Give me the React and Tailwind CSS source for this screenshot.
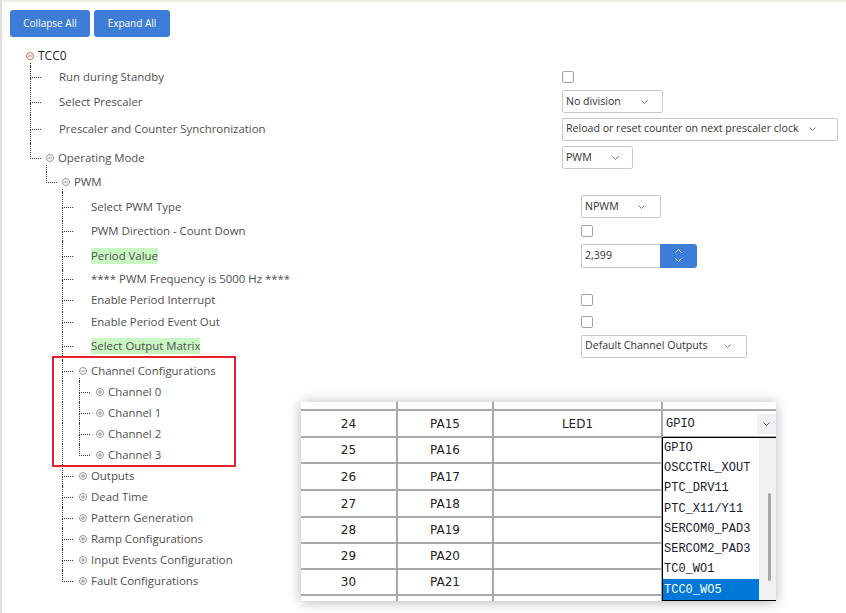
import React from 'react';

// tree of TCC0 settings; d = depth, node = 'open' | 'closed' for expandable items
const rows = [
  { d: 0, label: 'TCC0', node: 'open', h: 'h-[20px]' },
  { d: 1, label: 'Run during Standby', h: 'h-[22px]', ctrl: { type: 'check' } },
  { d: 1, label: 'Select Prescaler', h: 'h-[27px]', ctrl: { type: 'select', value: 'No division', w: 'w-[101px]', pr: 'pr-[14px]' } },
  { d: 1, label: 'Prescaler and Counter Synchronization', h: 'h-[28px]', ctrl: { type: 'select', value: 'Reload or reset counter on next prescaler clock', w: 'w-[276px]', pr: 'pr-[21px]' } },
  { d: 1, label: 'Operating Mode', node: 'open', h: 'h-[29px]', ctrl: { type: 'select', value: 'PWM', w: 'w-[71px]', pr: 'pr-[13px]' } },
  { d: 2, label: 'PWM', node: 'open', h: 'h-[20px]' },
  { d: 3, label: 'Select PWM Type', h: 'h-[29px]', ctrl: { type: 'select', value: 'NPWM', w: 'w-[80px]', pr: 'pr-[15px]' } },
  { d: 3, label: 'PWM Direction - Count Down', h: 'h-[20px]', ctrl: { type: 'check' } },
  { d: 3, label: 'Period Value', hl: true, h: 'h-[29px]', ctrl: { type: 'spin', value: '2,399' } },
  { d: 3, label: '**** PWM Frequency is 5000 Hz ****', h: 'h-[18px]' },
  { d: 3, label: 'Enable Period Interrupt', h: 'h-[24px]', ctrl: { type: 'check' } },
  { d: 3, label: 'Enable Period Event Out', h: 'h-[20px]', ctrl: { type: 'check' } },
  { d: 3, label: 'Select Output Matrix', hl: true, h: 'h-[28px]', ctrl: { type: 'select', value: 'Default Channel Outputs', w: 'w-[166px]', pr: 'pr-[15px]' } },
  { d: 3, label: 'Channel Configurations', node: 'open', h: 'h-[21px]' },
  { d: 4, label: 'Channel 0', node: 'closed', h: 'h-[21px]' },
  { d: 4, label: 'Channel 1', node: 'closed', h: 'h-[21px]' },
  { d: 4, label: 'Channel 2', node: 'closed', h: 'h-[21px]' },
  { d: 4, label: 'Channel 3', node: 'closed', h: 'h-[21px]' },
  { d: 3, label: 'Outputs', node: 'closed', h: 'h-[21px]' },
  { d: 3, label: 'Dead Time', node: 'closed', h: 'h-[21px]' },
  { d: 3, label: 'Pattern Generation', node: 'closed', h: 'h-[21px]' },
  { d: 3, label: 'Ramp Configurations', node: 'closed', h: 'h-[21px]' },
  { d: 3, label: 'Input Events Configuration', node: 'closed', h: 'h-[21px]' },
  { d: 3, label: 'Fault Configurations', node: 'closed', h: 'h-[21px]' },
];

const guideW = { 1: 'w-[16px]', 2: 'w-[16px]', 3: 'w-[17px]' };
const nodeGap = { 1: 'w-[5px]', 2: 'w-[5px]', 3: 'w-[6px]', 4: 'w-[6px]' };
const dots = 'border-dotted border-[#333]';

const pins = [
  { n: 24, pin: 'PA15', name: 'LED1', h: 'h-[27px]' },
  { n: 25, pin: 'PA16', h: 'h-[26px]' },
  { n: 26, pin: 'PA17', h: 'h-[27px]' },
  { n: 27, pin: 'PA18', h: 'h-[27px]' },
  { n: 28, pin: 'PA19', h: 'h-[26px]' },
  { n: 29, pin: 'PA20', h: 'h-[26px]' },
  { n: 30, pin: 'PA21', h: 'h-[26px]' },
];

const functions = [
  { v: 'GPIO', h: 'h-[20px]' },
  { v: 'OSCCTRL_XOUT', h: 'h-[20px]' },
  { v: 'PTC_DRV11', h: 'h-[20px]' },
  { v: 'PTC_X11/Y11', h: 'h-[21px]' },
  { v: 'SERCOM0_PAD3', h: 'h-[20px]' },
  { v: 'SERCOM2_PAD3', h: 'h-[20px]' },
  { v: 'TC0_WO1', h: 'h-[20px]' },
  { v: 'TCC0_WO5', h: 'h-[21px]', sel: true },
];

// true when a later sibling at depth k follows row i
function continues(i, k) {
  for (let j = i + 1; j < rows.length; j++) {
    if (rows[j].d < k) return false;
    if (rows[j].d === k) return true;
  }
  return false;
}

function Toggle({ open, color = '#8a8a8a' }) {
  return (
    <svg width="8" height="8" viewBox="0 0 8 8" className="block shrink-0">
      <circle cx="4" cy="4" r="3.5" fill="none" stroke={color} strokeWidth="0.9" />
      <path d="M2 4h4" stroke={color} strokeWidth="0.9" />
      {!open && <path d="M4 2v4" stroke={color} strokeWidth="0.9" />}
    </svg>
  );
}

function Chevron({ color = '#7a7a7a', up = false }) {
  return (
    <svg width="7" height="4" viewBox="0 0 7 4" className="block shrink-0">
      <path d={up ? 'M0.5 3.5L3.5 0.5L6.5 3.5' : 'M0.5 0.5L3.5 3.5L6.5 0.5'} fill="none" stroke={color} strokeWidth="1" />
    </svg>
  );
}

function Control({ ctrl }) {
  if (ctrl.type === 'check') {
    return <span className="block h-[12px] w-[12px] rounded-[2px] border border-[#a3a3a3] bg-white" />;
  }
  if (ctrl.type === 'spin') {
    return (
      <div className="flex h-[24px]">
        <div className="flex w-[79px] items-center rounded-l-[2px] border border-r-0 border-[#c8c8c8] bg-white pl-[3px] text-[10.6px] text-[#333]">
          {ctrl.value}
        </div>
        <div className="flex w-[37px] flex-col items-center justify-center gap-[5px] rounded-r-[3px] bg-[#3d7dd8]">
          <Chevron color="#fff" up />
          <Chevron color="#fff" />
        </div>
      </div>
    );
  }
  return (
    <div className={`flex h-[23px] ${ctrl.w} ${ctrl.pr} items-center justify-between rounded-[2px] border border-[#c8c8c8] bg-white pl-[3px] text-[10.6px] text-[#333]`}>
      <span className="whitespace-nowrap">{ctrl.value}</span>
      <Chevron />
    </div>
  );
}

function TreeRow({ row, i }) {
  const { d } = row;
  const open = row.node === 'open';
  const last = d > 0 && !continues(i, d);
  const guides = [];
  for (let k = 1; k < d; k++) guides.push({ k, on: continues(i, k) });

  const label = (
    <span
      className={`whitespace-nowrap leading-[16px] ${d === 0 ? 'text-[12px] text-[#1d1d1d]' : 'text-[11.4px] text-[#4f4f4f]'} ${row.hl ? 'bg-[#c9f7c2]' : ''}`}
    >
      {row.label}
    </span>
  );

  return (
    <div className={`flex ${row.h}`}>
      <div className={`flex shrink-0 items-stretch ${d >= 3 ? 'w-[579px]' : 'w-[560px]'}`}>
        {d === 0 ? (
          <div className="w-[24px] shrink-0" />
        ) : (
          <>
            <div className="w-[28px] shrink-0" />
            {guides.map((g) => (
              <div key={g.k} className={`${guideW[g.k]} shrink-0 ${g.on ? `border-l ${dots}` : ''}`} />
            ))}
            <div className="flex w-[11px] shrink-0 flex-col">
              <div className={`h-[calc(50%+1px)] border-b border-l ${dots}`} />
              <div className={`flex-1 ${last ? '' : `border-l ${dots}`}`} />
            </div>
          </>
        )}
        {row.node ? (
          <>
            {d > 0 && <div className={`${nodeGap[d]} shrink-0`} />}
            <div className="flex w-[8px] shrink-0 flex-col">
              <div className="mb-[3px] flex-1" />
              <Toggle open={open} color={d === 0 ? '#c0603c' : '#8a8a8a'} />
              <div className="mt-[3px] flex-1">
                {open && <div className={`h-full border-l ${dots} ${d === 0 ? 'ml-[4px]' : ''}`} />}
              </div>
            </div>
            <div className="w-[4px] shrink-0" />
          </>
        ) : (
          <div className="w-[18px] shrink-0" />
        )}
        <div className="flex items-center">{label}</div>
      </div>
      {row.ctrl && (
        <div className="flex items-center">
          <Control ctrl={row.ctrl} />
        </div>
      )}
    </div>
  );
}

function PinCells({ n, pin, children, h, top }) {
  return (
    <div className={`flex ${h} border-b-2 border-[#a9a9a9]`}>
      <div className="flex w-[97px] items-center justify-center border-r-2 border-[#a9a9a9]">{n}</div>
      <div className="flex w-[96px] items-center justify-center border-r-2 border-[#a9a9a9]">{pin}</div>
      <div className="flex w-[169px] items-center justify-center border-r-2 border-[#a9a9a9]">{top}</div>
      <div className="flex flex-1 items-center">{children}</div>
    </div>
  );
}

function PinPopup() {
  return (
    <div className="absolute left-[299px] top-[400px] h-[199px] w-[475px] overflow-hidden bg-white font-['DejaVu_Sans',sans-serif] text-[12px] text-[#222] shadow-[0_1px_12px_rgba(0,0,0,0.3)]">
      <PinCells h="h-[9px]" />
      {pins.map((p) => (
        <PinCells key={p.n} n={p.n} pin={p.pin} top={p.name} h={p.h}>
          {p.name && (
            <div className="flex h-[20px] w-full">
              <div className="flex flex-1 items-center bg-white pl-[3px] font-['Liberation_Mono',monospace] text-[12px] text-[#1a1a2e]">GPIO</div>
              <div className="flex w-[19px] items-center justify-center bg-[#eef0f3]">
                <Chevron color="#666" />
              </div>
            </div>
          )}
        </PinCells>
      ))}
      <div className="flex h-[20px]">
        <div className="w-[97px] border-r-2 border-[#a9a9a9]" />
        <div className="w-[96px] border-r-2 border-[#a9a9a9]" />
        <div className="w-[169px] border-r-2 border-[#a9a9a9]" />
      </div>

      <div className="absolute left-[361px] top-[35px] flex h-[164px] w-[114px] border-b border-l border-t border-black bg-white">
        <div className="flex w-[96px] flex-col">
          {functions.map((f) => (
            <div
              key={f.v}
              className={`flex ${f.h} items-center pl-[1px] font-['Liberation_Mono',monospace] text-[12px] ${f.sel ? 'bg-[#0078d7] text-white' : 'text-[#1a1a2e]'}`}
            >
              {f.v}
            </div>
          ))}
        </div>
        <div className="flex flex-1 flex-col bg-[#f0f0f0]">
          <div className="ml-[9px] mt-[55px] h-[88px] w-[3px] rounded-full bg-[#a6a6a6]" />
        </div>
      </div>
    </div>
  );
}

export default function App() {
  return (
    <div className="relative h-[613px] w-[846px] overflow-hidden border-l-2 border-t-2 border-l-[#dedede] border-t-[#f2f0e6] bg-white font-['Open_Sans','Noto_Sans',sans-serif]">
      <div className="ml-[8px] mt-[8px] flex gap-[4px]">
        <button type="button" className="h-[27px] w-[80px] rounded-[3px] bg-[#3d7dd8] text-[10px] text-white">
          Collapse All
        </button>
        <button type="button" className="h-[27px] w-[76px] rounded-[3px] bg-[#3d7dd8] text-[10px] text-white">
          Expand All
        </button>
      </div>

      <div className="mt-[9px] flex flex-col">
        {rows.map((row, i) => (
          <TreeRow key={row.label} row={row} i={i} />
        ))}
      </div>

      <div className="absolute left-[50px] top-[354px] h-[111px] w-[184px] border-2 border-[#e5202b]" />

      <PinPopup />
    </div>
  );
}
